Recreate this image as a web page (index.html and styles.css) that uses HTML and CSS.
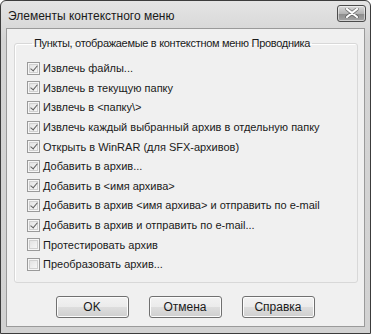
FILE: index.html
```html
<!DOCTYPE html>
<html lang="ru">
<head>
<meta charset="utf-8">
<title>Элементы контекстного меню</title>
<link rel="stylesheet" href="styles.css">
</head>
<body>
<div class="window">
  <div class="titlebar">
    <span class="title">Элементы контекстного меню</span>
    <span class="close" aria-label="Закрыть">
      <svg width="14" height="10" viewBox="0 0 14 10"><path d="M2 1 L12 9 M12 1 L2 9" stroke="#3a3a3a" stroke-width="3.6" stroke-linecap="round" opacity="0.55"/><path d="M2 1 L12 9 M12 1 L2 9" stroke="#fff" stroke-width="2.2" stroke-linecap="round"/></svg>
    </span>
  </div>
  <div class="client">
    <fieldset class="group">
      <legend>Пункты, отображаемые в контекстном меню Проводника</legend>
      <ul class="list">
        <li class="item"><span class="box on"></span>Извлечь файлы...</li>
        <li class="item"><span class="box on"></span>Извлечь в текущую папку</li>
        <li class="item"><span class="box on"></span>Извлечь в &lt;папку\&gt;</li>
        <li class="item"><span class="box on"></span>Извлечь каждый выбранный архив в отдельную папку</li>
        <li class="item"><span class="box on"></span>Открыть в WinRAR (для SFX-архивов)</li>
        <li class="item"><span class="box on"></span>Добавить в архив...</li>
        <li class="item"><span class="box on"></span>Добавить в &lt;имя архива&gt;</li>
        <li class="item"><span class="box on"></span>Добавить в архив &lt;имя архива&gt; и отправить по e-mail</li>
        <li class="item"><span class="box on"></span>Добавить в архив и отправить по e-mail...</li>
        <li class="item"><span class="box"></span>Протестировать архив</li>
        <li class="item"><span class="box"></span>Преобразовать архив...</li>
      </ul>
    </fieldset>
    <div class="buttons">
      <span class="btn">OK</span>
      <span class="btn">Отмена</span>
      <span class="btn">Справка</span>
    </div>
  </div>
</div>
</body>
</html>
```
FILE: styles.css
```css
html, body { margin: 0; padding: 0; background: #fff; }
body { font-family: "Liberation Sans", Arial, sans-serif; font-size: 11px; color: #1a1a1a; }

.window {
  width: 371px; height: 334px; box-sizing: border-box;
  border: 1px solid #3c3c3c; border-radius: 6px 6px 0 0;
  background: linear-gradient(#e4e4e4, #d4d4d4 40px, #d2d2d2);
  display: flex; flex-direction: column;
}
.titlebar {
  height: 28px; display: flex; align-items: center; justify-content: space-between;
  padding: 0 4px 0 7px;
}
.title { font-size: 12px; color: #1a1a1a; padding-top: 2px; }
.close {
  width: 29px; height: 17px; box-sizing: border-box; margin-top: -3px;
  border: 1px solid #4c4c4c; border-radius: 3px;
  background: linear-gradient(#dadada, #b4b4b4 50%, #8c8c8c 51%, #a4a4a4);
  box-shadow: inset 0 0 0 1px rgba(255,255,255,0.5);
  display: flex; align-items: center; justify-content: center;
}
.client {
  flex: 1; margin: 0 5px 6px 5px;
  border: 1px solid #9a9a9a; background: #f0f0f0;
  padding: 7px 6px 8px 7px;
  display: flex; flex-direction: column;
}
.group {
  margin: 0; padding: 8px 0 8px 12px;
  border: 1px solid #d8d8d8; border-radius: 3px;
  box-shadow: inset 1px 1px 0 #fff;
}
.group legend { padding: 0 2px; margin-left: 5px; line-height: 14px; letter-spacing: -0.3px; }
.list { list-style: none; margin: 0; padding: 0; }
.item { height: 19.6px; display: flex; align-items: center; gap: 3px; }
.box {
  width: 13px; height: 13px; box-sizing: border-box; flex: none;
  border: 1px solid #9a9a9a; background: linear-gradient(135deg, #dedede, #fbfbfb);
  box-shadow: inset 0 0 0 1px #f6f6f6, inset 0 0 0 2px #d0d0d0;
  position: relative;
}
.box.on::after {
  content: ""; position: absolute; left: 3.5px; top: 1px; width: 3px; height: 6px;
  border: solid #5e5e5e; border-width: 0 1.7px 1.7px 0; transform: rotate(40deg);
}
.buttons { display: flex; justify-content: center; gap: 20px; margin-top: 13px; padding-right: 2px; }
.btn {
  width: 73px; height: 22px; box-sizing: border-box;
  border: 1px solid #707070; border-radius: 3px;
  background: linear-gradient(#f2f2f2, #ebebeb 50%, #dddddd 51%, #cfcfcf);
  box-shadow: inset 0 0 0 1px #fcfcfc;
  display: flex; align-items: center; justify-content: center; font-size: 12px;
}
```
